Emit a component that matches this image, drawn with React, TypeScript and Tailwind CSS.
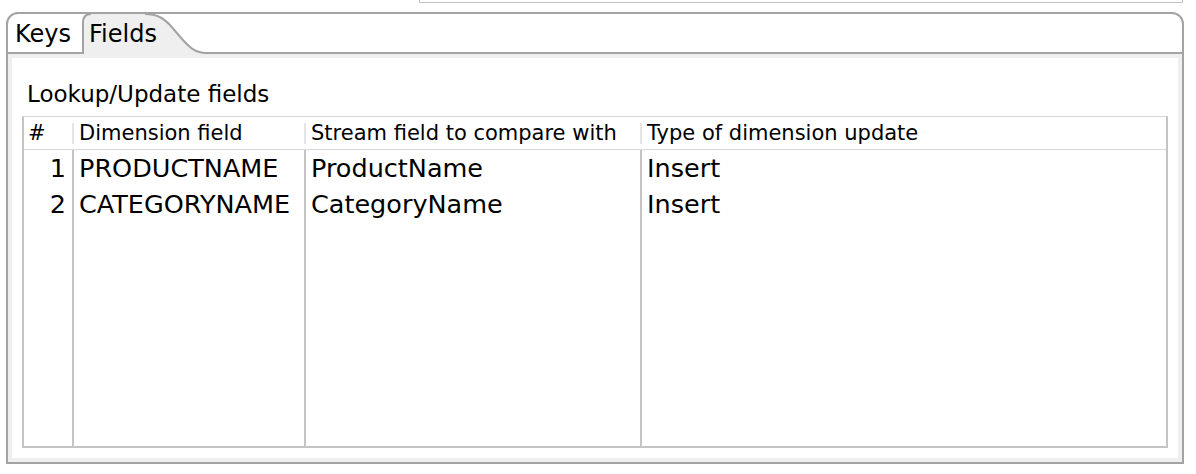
import React from "react";

type Row = { n: number; dim: string; stream: string; kind: string };

const rows: Row[] = [
  { n: 1, dim: "PRODUCTNAME", stream: "ProductName", kind: "Insert" },
  { n: 2, dim: "CATEGORYNAME", stream: "CategoryName", kind: "Insert" },
];

const font = "font-['DejaVu_Sans',sans-serif]";

/** Selected tab shape: rounded left corner, S-curve on the right */
const FieldsTabShape = () => (
  <svg className="absolute inset-0" width="126" height="40" viewBox="0 0 126 40">
    <path d="M0,40 V9 Q0,0 9,0 H63 C76,0 82,5 88,11 L100,25 C108,34 114,39 124,39 H126 V40 Z" fill="#efefef" />
    <path d="M1,40 V9 Q1,0 9,0" fill="none" stroke="#a3a3a3" strokeWidth="2" />
    <path d="M63,0 C76,0 82,5 88,11 L100,25 C108,34 114,39 124,39 H126" fill="none" stroke="#a3a3a3" strokeWidth="2" />
  </svg>
);

const HeaderSep = () => <div className="w-[2px] h-[21px] bg-[#e4e4e4] shrink-0" />;

export default function App() {
  return (
    <div className={`w-[1196px] h-[474px] bg-white text-black ${font}`}>
      {/* box above, cut off by the window */}
      <div className="ml-[419px] w-[764px] h-[3px] border-x border-b border-[#c2c2c2]" />

      {/* tab folder */}
      <div className="mt-[9px] ml-[6px] w-[1178px] h-[452px] border-2 border-[#a3a3a3] rounded-t-[12px] flex flex-col overflow-hidden">
        <div className="h-[40px] flex shrink-0">
          <div className="w-[74px] border-b-2 border-[#a3a3a3] pl-[7px] pt-[6px] text-[24px] leading-[28px]">Keys</div>
          <div className="relative w-[126px]">
            <FieldsTabShape />
            <div className="relative pl-[7px] pt-[6px] text-[24px] leading-[28px]">Fields</div>
          </div>
          <div className="flex-1 border-b-2 border-[#a3a3a3]" />
        </div>

        <div className="flex-1 bg-[#efefef] p-[4px] flex">
          <div className="flex-1 bg-white px-[10px] pt-[22px] pb-[10px] flex flex-col">
            <div className="pl-[5px] h-[28px] text-[23px] leading-[28px] mb-[8px] whitespace-nowrap">Lookup/Update fields</div>

            {/* table */}
            <div className="flex-1 flex flex-col border-2 border-t border-[#c4c4c4] border-t-[#d6d6d6]">
              <div className="h-[33px] flex items-center border-b border-[#d8d8d8] text-[21px] leading-[32px] shrink-0">
                <div className="w-[48px] pl-[4px]">#</div>
                <HeaderSep />
                <div className="w-[230px] pl-[5px]">Dimension field</div>
                <HeaderSep />
                <div className="w-[334px] pl-[5px] whitespace-nowrap">Stream field to compare with</div>
                <HeaderSep />
                <div className="flex-1 pl-[5px]">Type of dimension update</div>
              </div>

              <div className="flex-1 flex flex-col text-[25.5px] leading-[36px]">
                {rows.map((r) => (
                  <div key={r.n} className="h-[36px] flex">
                    <div className="w-[48px] text-right pr-[6px]">{r.n}</div>
                    <div className="w-[232px] border-l-2 border-[#c4c4c4] pl-[5px] whitespace-nowrap">{r.dim}</div>
                    <div className="w-[336px] border-l-2 border-[#c4c4c4] pl-[5px]">{r.stream}</div>
                    <div className="flex-1 border-l-2 border-[#c4c4c4] pl-[5px]">{r.kind}</div>
                  </div>
                ))}
                <div className="flex-1 flex">
                  <div className="w-[48px]" />
                  <div className="w-[232px] border-l-2 border-[#c4c4c4]" />
                  <div className="w-[336px] border-l-2 border-[#c4c4c4]" />
                  <div className="flex-1 border-l-2 border-[#c4c4c4]" />
                </div>
              </div>
            </div>
          </div>
        </div>
      </div>
    </div>
  );
}
